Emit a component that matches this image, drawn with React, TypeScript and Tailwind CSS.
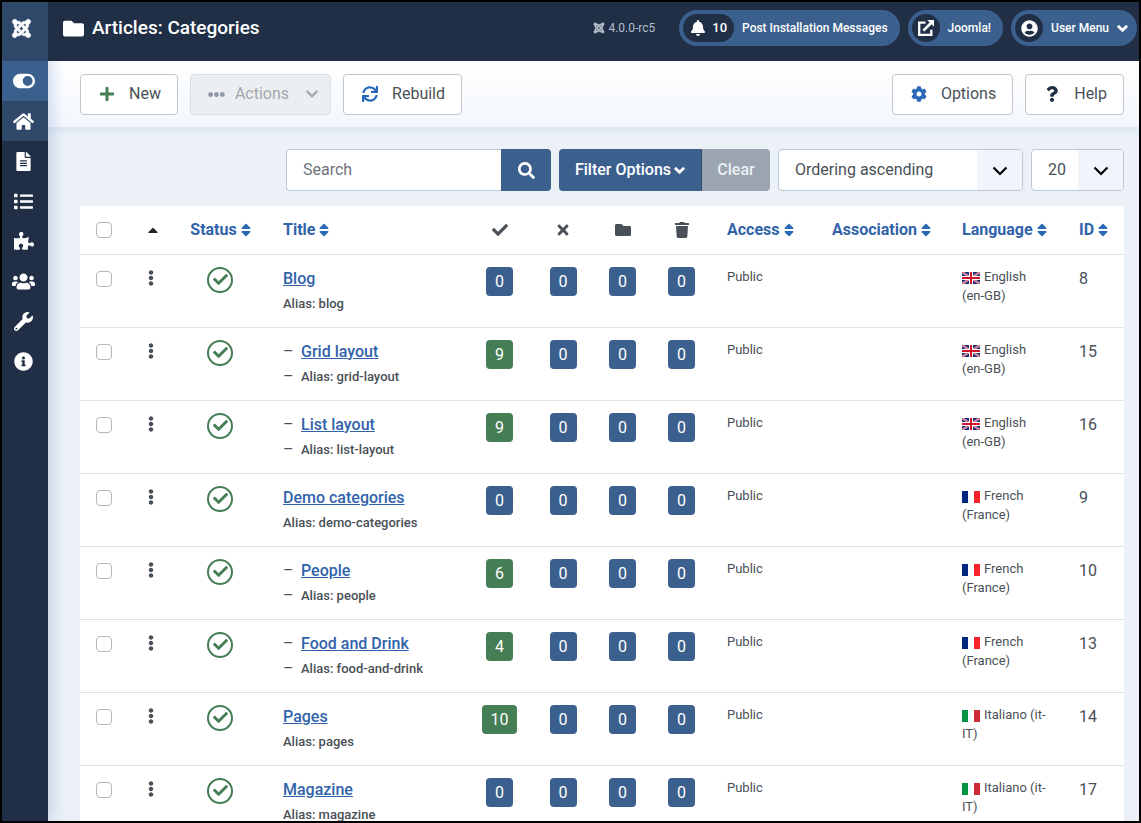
import type { ReactNode } from "react";
import {
  FaBell,
  FaCaretUp,
  FaCheck,
  FaChevronDown,
  FaCog,
  FaEllipsisH,
  FaEllipsisV,
  FaFileAlt,
  FaFolder,
  FaHome,
  FaInfoCircle,
  FaJoomla,
  FaList,
  FaPlus,
  FaPuzzlePiece,
  FaQuestion,
  FaSearch,
  FaSort,
  FaSync,
  FaTimes,
  FaToggleOn,
  FaTrash,
  FaUserCircle,
  FaUsers,
  FaWrench,
} from "react-icons/fa";

type Lang = "en" | "fr" | "it";

interface Category {
  id: number;
  title: string;
  alias: string;
  level: number;
  published: number;
  lang: Lang;
}

const categories: Category[] = [
  { id: 8, title: "Blog", alias: "blog", level: 0, published: 0, lang: "en" },
  { id: 15, title: "Grid layout", alias: "grid-layout", level: 1, published: 9, lang: "en" },
  { id: 16, title: "List layout", alias: "list-layout", level: 1, published: 9, lang: "en" },
  { id: 9, title: "Demo categories", alias: "demo-categories", level: 0, published: 0, lang: "fr" },
  { id: 10, title: "People", alias: "people", level: 1, published: 6, lang: "fr" },
  { id: 13, title: "Food and Drink", alias: "food-and-drink", level: 1, published: 4, lang: "fr" },
  { id: 14, title: "Pages", alias: "pages", level: 0, published: 10, lang: "it" },
  { id: 17, title: "Magazine", alias: "magazine", level: 0, published: 0, lang: "it" },
];

const languageNames: Record<Lang, string> = {
  en: "English (en-GB)",
  fr: "French (France)",
  it: "Italiano (it-IT)",
};

const menuItems = [
  { label: "Toggle Menu", icon: <FaToggleOn size={22} />, bg: "bg-[#3c608e]" },
  { label: "Home Dashboard", icon: <FaHome size={21} />, bg: "bg-[#2f486a]" },
  { label: "Content", icon: <FaFileAlt size={19} />, bg: "" },
  { label: "Menus", icon: <FaList size={19} />, bg: "" },
  { label: "Components", icon: <FaPuzzlePiece size={20} />, bg: "" },
  { label: "Users", icon: <FaUsers size={23} />, bg: "" },
  { label: "System", icon: <FaWrench size={19} />, bg: "" },
  { label: "Help", icon: <FaInfoCircle size={19} />, bg: "" },
];

const Flag = ({ lang }: { lang: Lang }) => {
  if (lang === "en") {
    return (
      <svg width="18" height="12" viewBox="0 0 18 12" className="mr-1 inline-block align-[-3px]" aria-hidden="true">
        <rect width="18" height="12" fill="#1b2a78" />
        <path d="M0 0 18 12M18 0 0 12" stroke="#f3dde3" strokeWidth="2" />
        <path d="M0 0 18 12M18 0 0 12" stroke="#d0142c" strokeWidth="0.8" />
        <path d="M9 0v12M0 6h18" stroke="#fff" strokeWidth="4" />
        <path d="M9 0v12M0 6h18" stroke="#d0142c" strokeWidth="2" />
      </svg>
    );
  }
  return (
    <svg width="18" height="12" viewBox="0 0 18 12" className="mr-1 inline-block align-[-3px]" aria-hidden="true">
      <rect width="18" height="12" fill="#fff" />
      <rect width="6" height="12" fill={lang === "fr" ? "#00267f" : "#079246"} />
      <rect x="12" width="6" height="12" fill={lang === "fr" ? "#f9222b" : "#cf2b37"} />
    </svg>
  );
};

const ExternalIcon = () => (
  <svg width="18" height="18" viewBox="0 0 18 18" fill="none" aria-hidden="true">
    <path d="M8.5 3.7H2.2v12.1h12.1v-5" stroke="currentColor" strokeWidth="2.3" />
    <path d="M6.4 11.6 14 4" stroke="currentColor" strokeWidth="2.7" />
    <path d="M10.2 1H17v6.8z" fill="currentColor" />
  </svg>
);

const SortHeader = ({ children, className = "" }: { children: ReactNode; className?: string }) => (
  <th className={`px-[15px] ${className}`}>
    <a href="#" className="inline-flex items-center gap-px font-bold text-[#3163ab]">
      {children}
      <FaSort size={16} className="text-[#2a69b8]" />
    </a>
  </th>
);

const Count = ({ value }: { value: number }) => (
  <td className="pt-3 text-center">
    <a
      href="#"
      className={`inline-block rounded px-[9px] text-base leading-[29px] text-white ${
        value > 0 ? "bg-[#457d54]" : "bg-[#3c608e]"
      }`}
    >
      {value}
    </a>
  </td>
);

const ToolbarButton = ({ icon, children }: { icon: ReactNode; children: ReactNode }) => (
  <button className="flex h-[41px] items-center rounded border border-[#c0c6ce] bg-white px-4 text-[#495057]">
    <span className="mr-3 flex w-5 justify-center">{icon}</span>
    {children}
  </button>
);

const SelectBox = ({ label, value, className }: { label: string; value: string; className: string }) => (
  <div className={`relative ${className}`}>
    <select
      aria-label={label}
      className="h-[42px] w-full appearance-none rounded border border-[#bcc7da] bg-white pl-4 text-base text-[#495057]"
    >
      <option>{value}</option>
    </select>
    <span className="pointer-events-none absolute inset-y-px right-px flex w-[45px] items-center justify-center rounded-r-[3px] bg-[#f0f4fb]">
      <svg width="16" height="10" viewBox="0 0 16 10" className="mt-0.5" fill="none" stroke="#000" strokeWidth="2.2">
        <path d="M1.5 1.5 8 8l6.5-6.5" />
      </svg>
    </span>
  </div>
);

const Sidebar = () => (
  <nav className="relative z-10 w-[46px] shrink-0 bg-[#202f46] text-white shadow-[4px_0_14px_rgba(90,125,190,0.28)]">
    <a href="#" aria-label="Back to dashboard" className="flex h-[59px] items-center bg-[#2f486a] pb-[7px] pl-[9px]">
      <FaJoomla size={21} stroke="currentColor" strokeWidth={14} className="overflow-visible" />
    </a>
    {menuItems.map((item) => (
      <a
        key={item.label}
        href="#"
        aria-label={item.label}
        className={`flex h-10 items-center justify-center pr-[3px] ${item.bg}`}
      >
        {item.icon}
      </a>
    ))}
  </nav>
);

const Header = () => (
  <header className="relative z-20 flex h-[59px] shrink-0 items-start bg-[#202f46] pt-2 pr-[2px] pl-[15px] text-white">
    <h1 className="flex h-9 items-center gap-2 text-[19px] font-medium">
      <FaFolder size={21} />
      Articles: Categories
    </h1>
    <div className="ml-auto flex items-center gap-2 text-xs font-medium">
      <span className="mr-4 flex items-center gap-[3px] font-normal text-[#b5bfcc]">
        <FaJoomla size={12} stroke="currentColor" strokeWidth={20} />
        4.0.0-rc5
      </span>
      <a href="#" className="flex h-9 items-center rounded-full bg-[#3c608e] px-1 pr-3">
        <span className="mr-2 flex h-7 items-center gap-1.5 rounded-full bg-[#202f46] px-[7px] text-[13px]">
          <FaBell size={16} />
          10
        </span>
        Post Installation Messages
      </a>
      <a href="#" className="flex h-9 items-center rounded-full bg-[#3c608e] px-1 pr-3">
        <span className="mr-2 flex size-7 items-center justify-center rounded-full bg-[#202f46]">
          <ExternalIcon />
        </span>
        Joomla!
      </a>
      <button className="flex h-9 items-center rounded-full bg-[#3c608e] px-1 pr-[9px]">
        <span className="mr-2 flex size-7 items-center justify-center rounded-full bg-[#202f46]">
          <FaUserCircle size={17} />
        </span>
        User Menu
        <FaChevronDown size={11} stroke="currentColor" strokeWidth={50} className="ml-2" />
      </button>
    </div>
  </header>
);

const Toolbar = () => (
  <div className="flex h-[67px] shrink-0 items-center gap-3 border-b border-[#e2e9f4] bg-linear-to-b from-white to-[#f3f7fd] pr-[15px] pl-8 shadow-[0_2px_8px_rgba(90,125,190,0.12)]">
    <ToolbarButton icon={<FaPlus size={16} className="text-[#457d54]" />}>New</ToolbarButton>
    <button
      disabled
      className="flex h-[41px] items-center rounded border border-[#dcdfe3] bg-[#eceff2] pr-[11px] pl-[17px] text-[#a3a8ae]"
    >
      <FaEllipsisH size={17} className="mr-[10px] text-[#8f98a5]" />
      Actions
      <FaChevronDown size={14} className="ml-4" />
    </button>
    <ToolbarButton icon={<FaSync size={16} className="text-[#2a69b8]" />}>Rebuild</ToolbarButton>
    <div className="ml-auto flex gap-3">
      <ToolbarButton icon={<FaCog size={16} className="text-[#2a69b8]" />}>Options</ToolbarButton>
      <ToolbarButton icon={<FaQuestion size={16} className="text-[#202f46]" />}>Help</ToolbarButton>
    </div>
  </div>
);

const Filters = () => (
  <div className="flex justify-end gap-2 pb-[15px]">
    <div className="flex">
      <input
        type="text"
        aria-label="Search"
        placeholder="Search"
        className="h-[42px] w-[215px] rounded-l border border-r-0 border-[#bcc7da] bg-white px-4 pb-0.5 placeholder:text-[#6c757d]"
      />
      <button aria-label="Submit search" className="flex w-[50px] items-center justify-center rounded-r bg-[#3c608e] text-white">
        <FaSearch size={17} />
      </button>
    </div>
    <div className="flex text-white">
      <button className="flex w-[143px] items-center justify-center gap-[3px] rounded-l border-r border-[#2f4f77] bg-[#3c608e] font-medium">
        Filter Options
        <FaChevronDown size={11} stroke="currentColor" strokeWidth={50} />
      </button>
      <button disabled className="w-[68px] rounded-r bg-[#9ba5b2] font-medium text-[#eceff3]">
        Clear
      </button>
    </div>
    <SelectBox label="Sort table by" value="Ordering ascending" className="w-[245px]" />
    <SelectBox label="Number of items" value="20" className="w-[93px]" />
  </div>
);

const CategoryRow = ({ category }: { category: Category }) => (
  <tr className="h-[73px] border-t border-[#dee2e6] align-top">
    <td className="pt-4 pl-4">
      <input
        type="checkbox"
        aria-label={`Select ${category.title}`}
        className="block size-4 appearance-none rounded-[4px] border border-[#b4b8bd] bg-white"
      />
    </td>
    <td className="pt-[15px] pr-1">
      <FaEllipsisV size={16} className="mx-auto text-[#495057]" />
    </td>
    <td className="pt-3">
      <a
        href="#"
        aria-label="Published"
        className="mx-auto flex size-[26px] items-center justify-center rounded-full border-2 border-[#457d54] text-[#457d54]"
      >
        <FaCheck size={15} />
      </a>
    </td>
    <th className="px-[15px] pt-3 text-left font-normal">
      <div className="flex">
        {category.level > 0 && <span className="w-[18px]">–</span>}
        <a href="#" className="font-medium text-[#3163ab] underline">
          {category.title}
        </a>
      </div>
      <div className="flex items-center text-[13px] leading-[26px] font-medium">
        {category.level > 0 && <span className="w-[18px] text-base leading-[26px] font-normal">–</span>}
        <span>Alias: {category.alias}</span>
      </div>
    </th>
    <Count value={category.published} />
    <Count value={0} />
    <Count value={0} />
    <Count value={0} />
    <td className="px-[15px] pt-3 text-[13px] leading-[19px]">Public</td>
    <td />
    <td className="px-[15px] pt-3 text-[13px] leading-[19px]">
      <Flag lang={category.lang} />
      {languageNames[category.lang]}
    </td>
    <td className="px-[15px] pt-3">{category.id}</td>
  </tr>
);

const CategoryTable = () => (
  <table className="w-full table-fixed border-collapse bg-white text-[#495057]">
    <thead>
      <tr className="h-12 text-left">
        <th className="w-[54px] pl-4">
          <input
            type="checkbox"
            aria-label="Check all items"
            className="block size-4 appearance-none rounded-[4px] border border-[#b4b8bd] bg-white"
          />
        </th>
        <th className="w-[38px]">
          <a href="#" aria-label="Ordering" className="flex justify-center text-[#212529]">
            <FaCaretUp size={16} />
          </a>
        </th>
        <th className="w-24 pl-1">
          <a href="#" className="flex items-center justify-center gap-px font-bold text-[#3163ab]">
            Status
            <FaSort size={16} className="text-[#2a69b8]" />
          </a>
        </th>
        <SortHeader>Title</SortHeader>
        <th className="w-[65px]" aria-label="Published items">
          <FaCheck size={16} className="mx-auto" />
        </th>
        <th className="w-[62px]" aria-label="Unpublished items">
          <FaTimes size={16} className="mx-auto" />
        </th>
        <th className="w-[57px]" aria-label="Archived items">
          <FaFolder size={16} className="mx-auto" />
        </th>
        <th className="w-[61px]" aria-label="Trashed items">
          <FaTrash size={16} className="mx-auto" />
        </th>
        <SortHeader className="w-[105px]">Access</SortHeader>
        <SortHeader className="w-[130px]">Association</SortHeader>
        <SortHeader className="w-[117px]">Language</SortHeader>
        <SortHeader className="w-[60px]">ID</SortHeader>
      </tr>
    </thead>
    <tbody>
      {categories.map((category) => (
        <CategoryRow key={category.id} category={category} />
      ))}
    </tbody>
  </table>
);

export default function App() {
  return (
    <div className="flex h-screen overflow-hidden border-2 border-black bg-[#ebf1f6] font-['Roboto',sans-serif] text-base text-[#495057]">
      <Sidebar />
      <div className="flex min-w-0 flex-1 flex-col">
        <Header />
        <Toolbar />
        <main className="min-h-0 flex-1 overflow-hidden pt-[21px] pr-[15px] pl-8">
          <Filters />
          <CategoryTable />
        </main>
      </div>
    </div>
  );
}
